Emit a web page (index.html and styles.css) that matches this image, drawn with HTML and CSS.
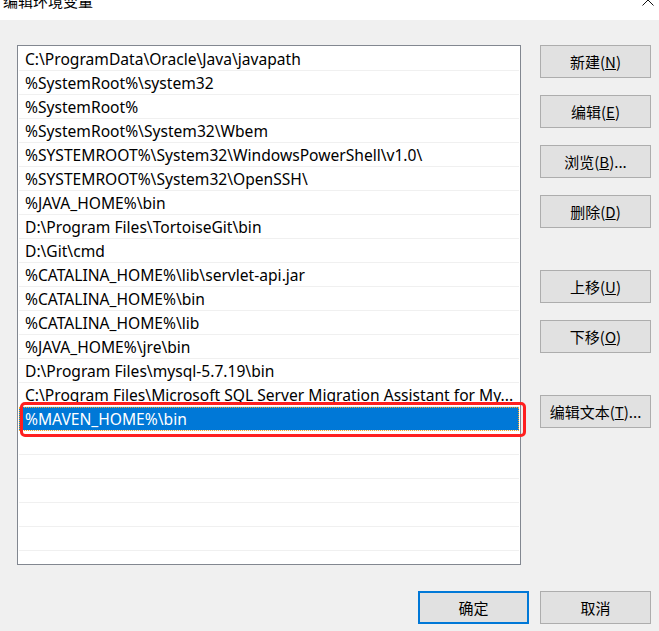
FILE: index.html
```html
<!DOCTYPE html>
<html lang="zh-CN">
<head>
  <meta charset="UTF-8">
  <title>编辑环境变量</title>
  <link rel="stylesheet" href="styles.css">
</head>
<body>
  <div class="titlebar">
    <span class="title">编辑环境变量</span>
    <svg class="close" width="12" height="12" viewBox="0 0 12 12">
      <path d="M0.5 0.5 L11.5 11.5 M11.5 0.5 L0.5 11.5" stroke="#111" stroke-width="1" fill="none"/>
    </svg>
  </div>

  <div class="main">
    <div class="list">
      <div class="row">C:\ProgramData\Oracle\Java\javapath</div>
      <div class="row">%SystemRoot%\system32</div>
      <div class="row">%SystemRoot%</div>
      <div class="row">%SystemRoot%\System32\Wbem</div>
      <div class="row">%SYSTEMROOT%\System32\WindowsPowerShell\v1.0\</div>
      <div class="row">%SYSTEMROOT%\System32\OpenSSH\</div>
      <div class="row">%JAVA_HOME%\bin</div>
      <div class="row">D:\Program Files\TortoiseGit\bin</div>
      <div class="row">D:\Git\cmd</div>
      <div class="row">%CATALINA_HOME%\lib\servlet-api.jar</div>
      <div class="row">%CATALINA_HOME%\bin</div>
      <div class="row">%CATALINA_HOME%\lib</div>
      <div class="row">%JAVA_HOME%\jre\bin</div>
      <div class="row">D:\Program Files\mysql-5.7.19\bin</div>
      <div class="row">C:\Program Files\Microsoft SQL Server Migration Assistant for My...</div>
      <div class="row selected">%MAVEN_HOME%\bin</div>
      <div class="row"></div>
      <div class="row"></div>
      <div class="row"></div>
      <div class="row"></div>
      <div class="row"></div>
      <div class="row partial"></div>
    </div>

    <div class="side">
      <button class="btn">新建(<u>N</u>)</button>
      <button class="btn">编辑(<u>E</u>)</button>
      <button class="btn">浏览(<u>B</u>)...</button>
      <button class="btn">删除(<u>D</u>)</button>
      <button class="btn group">上移(<u>U</u>)</button>
      <button class="btn">下移(<u>O</u>)</button>
      <button class="btn group">编辑文本(<u>T</u>)...</button>
    </div>
  </div>

  <div class="footer">
    <button class="btn default">确定</button>
    <button class="btn">取消</button>
  </div>
</body>
</html>
```

FILE: styles.css
```css
body {
  margin: 0;
  width: 659px;
  height: 631px;
  overflow: hidden;
  background-color: #f0f0f0;
  font-family: "Noto Sans", "Noto Sans CJK SC", sans-serif;
  font-size: 15px;
  color: #000;
}
.titlebar {
  height: 20px;
  background-color: #fff;
  display: flex;
  justify-content: space-between;
  align-items: flex-start;
  overflow: hidden;
}
.title {
  margin: -9px 0 0 3px;
  font-family: "Noto Sans CJK SC", sans-serif;
  font-size: 15px;
  line-height: 20px;
}
.close {
  margin: -6px 5px 0 0;
}
.main {
  display: flex;
  align-items: flex-start;
  padding: 25px 0 0 17px;
}
.list {
  box-sizing: border-box;
  width: 504px;
  height: 520px;
  padding: 1px;
  background-color: #fff;
  border: 1px solid #828790;
}
.row {
  position: relative;
  box-sizing: border-box;
  height: 24px;
  padding-left: 6px;
  font-size: 15.6px;
  line-height: 24px;
  border-bottom: 1px solid #f0f0f0;
  white-space: nowrap;
  overflow: hidden;
}
.row.partial {
  height: 12px;
  border-bottom: none;
}
.row.selected {
  overflow: visible;
  background-color: #0078d7;
  color: #fff;
  outline: 1px dotted #f5a623;
  outline-offset: -1px;
}
.row.selected::after {
  content: "";
  position: absolute;
  left: 1px;
  top: -5px;
  right: -7px;
  bottom: -7px;
  border: 3px solid #ff1f1f;
  border-radius: 5px;
}
.side {
  display: flex;
  flex-direction: column;
  gap: 17px;
  margin-left: 19px;
}
.btn {
  box-sizing: border-box;
  width: 111px;
  height: 33px;
  padding: 0;
  background-color: #e1e1e1;
  border: 1px solid #adadad;
  font-family: "Noto Sans CJK SC", sans-serif;
  font-size: 15px;
  color: #000;
}
.btn.group {
  margin-top: 25px;
}
.footer {
  display: flex;
  justify-content: flex-end;
  gap: 11px;
  padding: 26px 8px 0 0;
}
.btn.default {
  border: 2px solid #0078d7;
}
```
